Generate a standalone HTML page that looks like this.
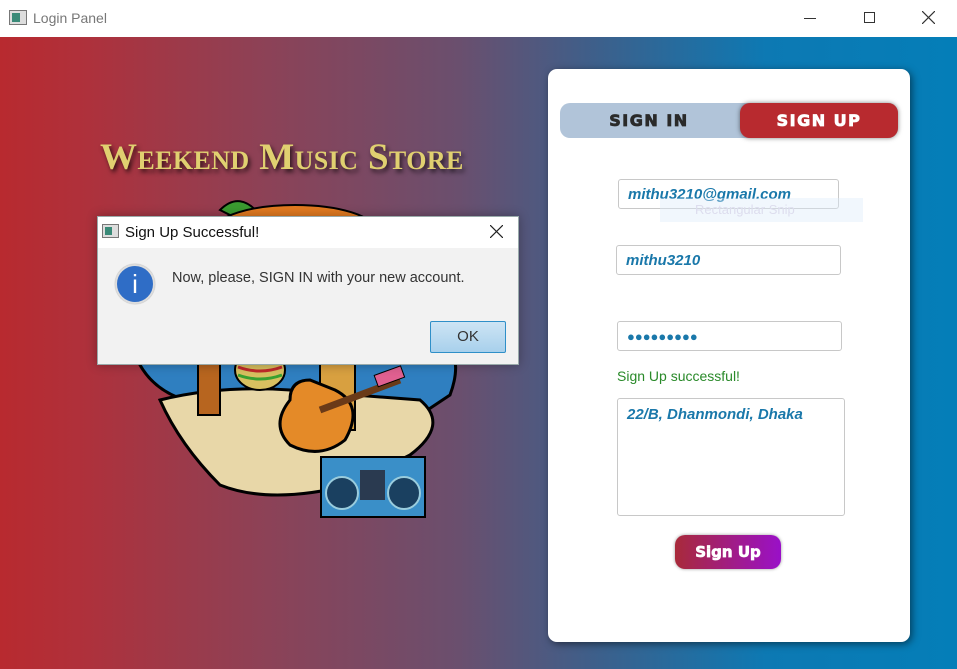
<!DOCTYPE html>
<html><head><meta charset="utf-8"><style>
*{margin:0;padding:0;box-sizing:border-box}
body{width:957px;height:669px;overflow:hidden;font-family:"Liberation Sans",sans-serif;background:#fff;position:relative}
.title{position:absolute;left:0;top:0;width:957px;height:37px;background:#fff}
.bg{position:absolute;left:0;top:37px;width:957px;height:632px;background:linear-gradient(90deg,#b82a2f 0%,#b0303a 8%,#8c4257 28%,#6a4f6e 48%,#3e5f8a 62%,#0d79b3 80%,#047eb8 100%)}
.card{position:absolute;left:548px;top:69px;width:362px;height:573px;background:#fff;border-radius:9px;box-shadow:2px 2px 8px rgba(0,0,0,.5)}
.tabs{position:absolute;left:12px;top:34px;width:338px;height:35px;background:#b1c4d9;border-radius:10px}
.tab{position:absolute;top:0;height:35px;line-height:35px;font-family:"DejaVu Sans",sans-serif;font-weight:bold;font-size:16px;letter-spacing:1.5px;text-align:center;-webkit-text-stroke:0.8px currentColor}
.in{position:absolute;border:1px solid #c8c8c8;border-radius:3px;background:#fff;color:#1a78aa;font-style:italic;font-weight:bold;font-family:"Liberation Sans",sans-serif;font-size:15px;padding-left:9px}
.dlg{position:absolute;left:97px;top:216px;width:422px;height:149px;background:#f2f2f2;border:1px solid #9aa;box-shadow:0 0 10px rgba(0,0,0,.3)}
</style></head><body>
<div class="title">
 <div style="position:absolute;left:9px;top:10px;width:18px;height:15px;border:1px solid #777;background:#ddd"><div style="position:absolute;left:2px;top:2px;width:8px;height:9px;background:#3a8a78"></div></div>
 <div style="position:absolute;left:33px;top:10px;font-size:14px;color:#777">Login Panel</div>
 <div style="position:absolute;left:804px;top:18px;width:12px;height:1px;background:#333"></div>
 <div style="position:absolute;left:864px;top:12px;width:11px;height:11px;border:1px solid #333"></div>
 <svg style="position:absolute;left:922px;top:11px" width="13" height="13"><path d="M0 0L13 13M13 0L0 13" stroke="#333" stroke-width="1.2"/></svg>
</div>
<div class="bg"></div>
<div style="position:absolute;left:100px;top:136px;font-family:'Liberation Serif',serif;font-weight:bold;font-size:37px;color:#e0d070;text-shadow:2px 3px 5px rgba(0,0,0,.7);font-variant:small-caps;white-space:nowrap;letter-spacing:0.4px">Weekend Music Store</div>
<svg style="position:absolute;left:120px;top:185px" width="345" height="340">
 <path d="M100 25 Q120 5 140 30 L130 40 Z" fill="#3a9a30" stroke="#000" stroke-width="2"/>
 <ellipse cx="175" cy="45" rx="80" ry="25" fill="#e27a20" stroke="#000" stroke-width="2"/>
 <path d="M20 180 Q10 150 40 140 L320 150 Q345 170 330 210 L300 230 Q200 250 90 220 Q40 215 20 180Z" fill="#2f7fc0" stroke="#000" stroke-width="3"/>
 <path d="M40 215 Q100 200 170 205 L300 215 Q330 240 290 270 L230 300 Q150 320 100 300 Q60 260 40 215Z" fill="#e8d7a8" stroke="#000" stroke-width="3"/>
 <rect x="78" y="170" width="22" height="60" fill="#b7651f" stroke="#000" stroke-width="2"/>
 <ellipse cx="140" cy="185" rx="25" ry="20" fill="#d8c060" stroke="#000" stroke-width="2"/>
 <path d="M118 182 Q140 190 162 182" stroke="#c02a2a" stroke-width="3" fill="none"/>
 <path d="M118 190 Q140 198 162 190" stroke="#3aa030" stroke-width="3" fill="none"/>
 <rect x="200" y="165" width="35" height="80" fill="#d8a040" stroke="#000" stroke-width="2"/>
 <path d="M170 215 Q170 195 190 195 L215 205 Q245 220 225 255 Q200 275 170 260 Q150 240 170 215Z" fill="#e48a28" stroke="#000" stroke-width="3"/>
 <path d="M200 225 L280 195" stroke="#6a3a18" stroke-width="7"/>
 <rect x="255" y="185" width="28" height="12" fill="#e06090" stroke="#000" transform="rotate(-20 270 190)"/>
 <rect x="201" y="272" width="104" height="60" fill="#3a8fc8" stroke="#000" stroke-width="2"/>
 <circle cx="222" cy="308" r="16" fill="#1a4060" stroke="#9cd" stroke-width="2"/>
 <circle cx="284" cy="308" r="16" fill="#1a4060" stroke="#9cd" stroke-width="2"/>
 <rect x="240" y="285" width="25" height="30" fill="#2a3a50"/>
</svg>
<div class="card">
 <div class="tabs">
  <div class="tab" style="left:0;width:178px;color:#2a2a2a">SIGN IN</div>
  <div class="tab" style="left:180px;width:158px;background:#b82a2f;color:#fff;border-radius:10px;box-shadow:0 0 5px rgba(0,0,0,.5)">SIGN UP</div>
 </div>
 <div class="in" style="left:70px;top:110px;width:221px;height:30px;line-height:30px">mithu3210@gmail.com</div>
 <div style="position:absolute;left:112px;top:129px;width:203px;height:24px;background:rgba(220,235,250,.4);color:#dde;font-size:13px;padding-left:35px;line-height:24px">Rectangular Snip</div>
 <div class="in" style="left:68px;top:176px;width:225px;height:30px;line-height:30px">mithu3210</div>
 <div class="in" style="left:69px;top:252px;width:225px;height:30px;line-height:30px;font-style:normal;font-size:13px;letter-spacing:0px">●●●●●●●●●</div>
 <div style="position:absolute;left:69px;top:299px;font-size:14px;color:#2a8a2a">Sign Up successful!</div>
 <div class="in" style="left:69px;top:329px;width:228px;height:118px;padding-top:7px">22/B, Dhanmondi, Dhaka</div>
 <div style="position:absolute;left:127px;top:466px;width:106px;height:34px;border-radius:10px;background:linear-gradient(90deg,#a82a3a,#9a10c8);color:#fff;font-family:'DejaVu Sans',sans-serif;font-weight:bold;font-size:15px;-webkit-text-stroke:0.7px #fff;text-align:center;line-height:34px;box-shadow:0 0 3px rgba(0,0,0,.4)">Sign Up</div>
</div>
<div class="dlg">
 <div style="position:absolute;left:0;top:0;width:420px;height:31px;background:#fff"></div>
 <div style="position:absolute;left:4px;top:7px;width:17px;height:14px;border:1px solid #777;background:#ddd"><div style="position:absolute;left:2px;top:2px;width:7px;height:8px;background:#3a8a78"></div></div>
 <div style="position:absolute;left:27px;top:7px;font-size:15px;color:#111">Sign Up Successful!</div>
 <svg style="position:absolute;left:392px;top:8px" width="13" height="13"><path d="M0 0L13 13M13 0L0 13" stroke="#222" stroke-width="1.2"/></svg>
 <div style="position:absolute;left:17px;top:47px;width:40px;height:40px;border-radius:50%;background:#2f6dc6;border:2px solid #ddd;box-shadow:0 0 1px #888;color:#fff;font-size:26px;text-align:center;line-height:36px">i</div>
 <div style="position:absolute;left:74px;top:53px;font-size:14.5px;color:#333">Now, please, SIGN IN with your new account.</div>
 <div style="position:absolute;left:332px;top:104px;width:76px;height:32px;border:1px solid #2f8fc8;border-radius:2px;background:linear-gradient(#cde4f4,#a8d0ec);font-size:15px;color:#333;text-align:center;line-height:30px">OK</div>
</div>
</body></html>
